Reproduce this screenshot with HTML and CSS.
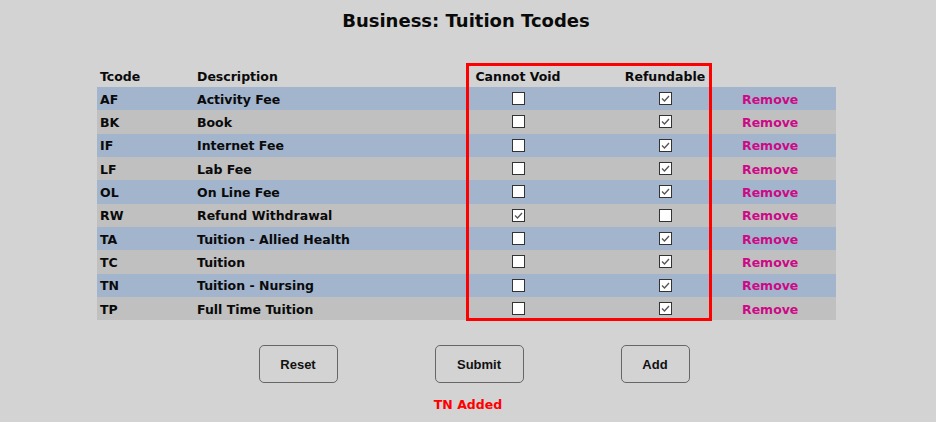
FILE: index.html
```html
<!DOCTYPE html>
<html>
<head>
<meta charset="utf-8">
<link rel="stylesheet" href="styles.css">
</head>
<body>
<div class="page">
  <h1 class="title">Business: Tuition Tcodes</h1>
  <div class="table">
    <div class="row head">
      <div class="cell">Tcode</div>
      <div class="cell">Description</div>
      <div class="cell center">Cannot Void</div>
      <div class="cell center ref">Refundable</div>
      <div class="cell"></div>
    </div>
    <div class="row blue"><div class="cell">AF</div><div class="cell">Activity Fee</div><div class="cell center"><span class="cb"></span></div><div class="cell center ref"><span class="cb on"><svg viewBox="0 0 11 11"><path d="M2 5.5 L4.5 8 L9 3"/></svg></span></div><div class="cell rm">Remove</div></div>
    <div class="row gray"><div class="cell">BK</div><div class="cell">Book</div><div class="cell center"><span class="cb"></span></div><div class="cell center ref"><span class="cb on"><svg viewBox="0 0 11 11"><path d="M2 5.5 L4.5 8 L9 3"/></svg></span></div><div class="cell rm">Remove</div></div>
    <div class="row blue"><div class="cell">IF</div><div class="cell">Internet Fee</div><div class="cell center"><span class="cb"></span></div><div class="cell center ref"><span class="cb on"><svg viewBox="0 0 11 11"><path d="M2 5.5 L4.5 8 L9 3"/></svg></span></div><div class="cell rm">Remove</div></div>
    <div class="row gray"><div class="cell">LF</div><div class="cell">Lab Fee</div><div class="cell center"><span class="cb"></span></div><div class="cell center ref"><span class="cb on"><svg viewBox="0 0 11 11"><path d="M2 5.5 L4.5 8 L9 3"/></svg></span></div><div class="cell rm">Remove</div></div>
    <div class="row blue"><div class="cell">OL</div><div class="cell">On Line Fee</div><div class="cell center"><span class="cb"></span></div><div class="cell center ref"><span class="cb on"><svg viewBox="0 0 11 11"><path d="M2 5.5 L4.5 8 L9 3"/></svg></span></div><div class="cell rm">Remove</div></div>
    <div class="row gray"><div class="cell">RW</div><div class="cell">Refund Withdrawal</div><div class="cell center"><span class="cb on"><svg viewBox="0 0 11 11"><path d="M2 5.5 L4.5 8 L9 3"/></svg></span></div><div class="cell center ref"><span class="cb"></span></div><div class="cell rm">Remove</div></div>
    <div class="row blue"><div class="cell">TA</div><div class="cell">Tuition - Allied Health</div><div class="cell center"><span class="cb"></span></div><div class="cell center ref"><span class="cb on"><svg viewBox="0 0 11 11"><path d="M2 5.5 L4.5 8 L9 3"/></svg></span></div><div class="cell rm">Remove</div></div>
    <div class="row gray"><div class="cell">TC</div><div class="cell">Tuition</div><div class="cell center"><span class="cb"></span></div><div class="cell center ref"><span class="cb on"><svg viewBox="0 0 11 11"><path d="M2 5.5 L4.5 8 L9 3"/></svg></span></div><div class="cell rm">Remove</div></div>
    <div class="row blue"><div class="cell">TN</div><div class="cell">Tuition - Nursing</div><div class="cell center"><span class="cb"></span></div><div class="cell center ref"><span class="cb on"><svg viewBox="0 0 11 11"><path d="M2 5.5 L4.5 8 L9 3"/></svg></span></div><div class="cell rm">Remove</div></div>
    <div class="row gray"><div class="cell">TP</div><div class="cell">Full Time Tuition</div><div class="cell center"><span class="cb"></span></div><div class="cell center ref"><span class="cb on"><svg viewBox="0 0 11 11"><path d="M2 5.5 L4.5 8 L9 3"/></svg></span></div><div class="cell rm">Remove</div></div>
    <div class="redbox"></div>
  </div>
  <div class="buttons">
    <button class="btn reset">Reset</button>
    <button class="btn submit">Submit</button>
    <button class="btn add">Add</button>
  </div>
  <div class="msg">TN Added</div>
</div>
</body>
</html>
```
FILE: styles.css
```css
html, body {
  margin: 0;
  padding: 0;
  background: #d3d3d3;
}
.page {
  width: 936px;
  height: 422px;
  font-family: "DejaVu Sans", sans-serif;
  color: #0a0a0a;
}
.title {
  margin: 0;
  padding-top: 9px;
  height: 24px;
  line-height: 24px;
  font-size: 18px;
  font-weight: bold;
  text-align: center;
  padding-right: 4px;
}
.table {
  position: relative;
  margin-top: 33px;
  margin-left: 97px;
  width: 739px;
  font-size: 12.5px;
  font-weight: bold;
}
.row {
  display: grid;
  grid-template-columns: 97px 273px 102px 170px 97px;
  height: 23.33px;
  align-items: center;
}
.row.head {
  height: 21px;
}
.row.head .cell {
  padding-top: 0;
}
.row.blue { background: #a2b5cd; }
.row.gray { background: #c0c0c0; }
.cell {
  padding-left: 3px;
  padding-top: 1px;
  white-space: nowrap;
}
.cell.center {
  padding-left: 0;
  padding-top: 0;
  display: flex;
  justify-content: center;
}
.cell.ref {
  padding-left: 22px;
}
.cell.rm {
  color: #cc0a86;
}
.cb {
  box-sizing: border-box;
  width: 13px;
  height: 13px;
  border: 1px solid #333;
  background: #fff;
  display: flex;
  align-items: center;
  justify-content: center;
}
.cb svg {
  width: 11px;
  height: 11px;
  fill: none;
  stroke: #555;
  stroke-width: 1.3;
}
.redbox {
  position: absolute;
  left: 369px;
  top: -3px;
  width: 246px;
  height: 258px;
  box-sizing: border-box;
  border: 3px solid #ff0000;
}
.buttons {
  display: flex;
  justify-content: center;
  gap: 97px;
  margin-top: 25px;
  padding-left: 12px;
}
.btn {
  height: 38px;
  border: 1px solid #666;
  border-radius: 5px;
  background: transparent;
  font-family: "Liberation Sans", Arial, sans-serif;
  font-size: 13px;
  font-weight: bold;
  color: #111;
  padding: 0;
}
.reset { width: 79px; }
.submit { width: 89px; }
.add { width: 69px; }
.msg {
  margin-top: 14px;
  line-height: 16px;
  text-align: center;
  color: #ff0000;
  font-size: 12.5px;
  font-weight: bold;
}
```
